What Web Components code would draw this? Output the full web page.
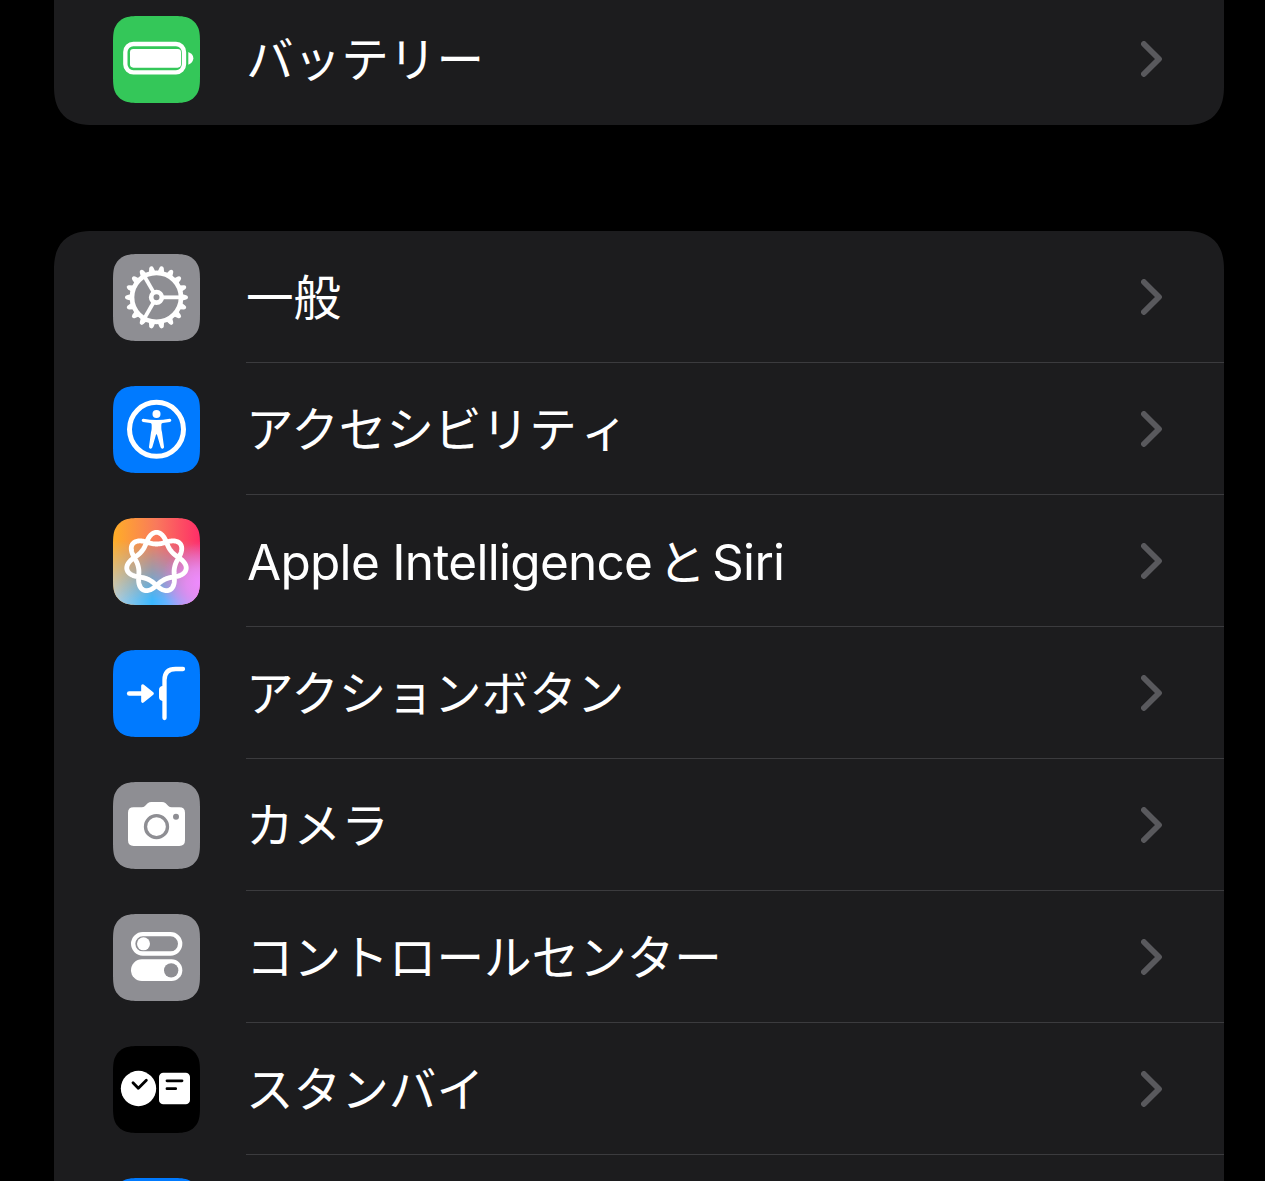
<!DOCTYPE html>
<html lang="ja">
<head>
<meta charset="utf-8">
<title>設定</title>
<style>
html, body { margin: 0; background: #000; }
body { height: 1181px; overflow: hidden; }
</style>
</head>
<body>
<settings-page></settings-page>
<script>
/* Continuous-curvature rounded square, 261 units wide. */
function tilePath(w, r) {
  const a = 1.528 * r, b = 1.088 * r, c = 0.868 * r, d = 0.631 * r, e = 0.075 * r, f = 0.372 * r, g = 0.169 * r;
  return `M${a} 0H${w - a}C${w - b} 0 ${w - c} 0 ${w - d} ${e}C${w - f} ${g} ${w - g} ${f} ${w - e} ${d}C${w} ${c} ${w} ${b} ${w} ${a}` +
    `V${w - a}C${w} ${w - b} ${w} ${w - c} ${w - e} ${w - d}C${w - g} ${w - f} ${w - f} ${w - g} ${w - d} ${w - e}C${w - c} ${w} ${w - b} ${w} ${w - a} ${w}` +
    `H${a}C${b} ${w} ${c} ${w} ${d} ${w - e}C${f} ${w - g} ${g} ${w - f} ${e} ${w - d}C0 ${w - c} 0 ${w - b} 0 ${w - a}` +
    `V${a}C0 ${b} 0 ${c} ${e} ${d}C${g} ${f} ${f} ${g} ${d} ${e}C${c} 0 ${b} 0 ${a} 0Z`;
}
const TILE = tilePath(261, 60);

function knotPath(cx, cy) {
  const pts = [];
  for (let i = 0; i < 560; i++) {
    const t = i / 560 * Math.PI * 4;
    const r = 71 + 17.5 * Math.cos(3.5 * t) + 2.5 * Math.cos(7 * t);
    pts.push((cx + r * Math.sin(t)).toFixed(2) + ' ' + (cy - r * Math.cos(t)).toFixed(2));
  }
  return 'M' + pts.join('L') + 'Z';
}

function gear(cx, cy) {
  let s = '';
  for (let i = 0; i < 18; i++) {
    s += `<path transform="translate(${cx} ${cy}) rotate(${i * 20})" d="M76 -10L89 -6.5Q94.500 -5 94.500 0Q94.500 5 89 6.5L76 10Z" fill="#fff"/>`;
  }
  for (const a of [0, 120, 240]) {
    s += `<path transform="translate(${cx} ${cy}) rotate(${a})" d="M18 0H72" stroke="#fff" stroke-width="11.500"/>`;
  }
  return s + `<circle cx="${cx}" cy="${cy}" r="73.500" fill="none" stroke="#fff" stroke-width="14"/>
    <circle cx="${cx}" cy="${cy}" r="16" fill="none" stroke="#fff" stroke-width="14"/>`;
}

/* Glyphs share a 261-unit tile whose origin is at (21, 21). */
const GLYPHS = {
  battery: { fill: '#34c759', art: `<g transform="translate(-18 -12)">
    <rect x="76" y="117" width="176" height="85" rx="24" fill="none" stroke="#fff" stroke-width="13"/>
    <rect x="90" y="132" width="153" height="56" rx="10" fill="#fff"/>
    <path d="M265 141Q280 147 280 160Q280 173 265 179Z" fill="#fff"/></g>` },
  general: { fill: '#8e8e93', art: gear(151.5, 151) },
  access: { fill: '#007aff', art: `<circle cx="151.5" cy="151" r="81" fill="none" stroke="#fff" stroke-width="15"/>
    <circle cx="151.5" cy="105" r="12" fill="#fff"/>
    <path d="M112 119Q107 119 107 124Q107 128 111 129L133 132Q137 133 137 137V148Q137 154 135 160L129 203Q128 208 133 209Q137 210 139 205L149 170Q151.500 162 154 170L164 205Q166 210 170 209Q175 208 174 203L168 160Q166 154 166 148V137Q166 133 170 132L192 129Q196 128 196 124Q196 119 191 119Q151.500 127 112 119Z" fill="#fff"/>` },
  siri: { fill: 'url(#base)', art: `<path d="${knotPath(151.5, 155)}" fill="none" stroke="#fff" stroke-width="14.500" stroke-linejoin="round"/>` },
  action: { fill: '#007aff', art: `<path d="M69.500 151.500H108" stroke="#fff" stroke-width="13.500" stroke-linecap="round"/>
    <path d="M110 128L139 151.500L110 175Z" fill="#fff" stroke="#fff" stroke-width="9" stroke-linejoin="round"/>
    <path d="M175.500 225V111Q175.500 78 209 78H231" fill="none" stroke="#fff" stroke-width="13" stroke-linecap="round"/>
    <path d="M176 129H170Q159 130 159 141V162Q159 173 170 174H176Z" fill="#fff"/>` },
  camera: { fill: '#8e8e93', art: `<path d="M83 97H107Q113 97 117 93L125 85Q130 81 136 81H168Q174 81 179 85L187 93Q191 97 197 97H220Q237 97 237 113V196Q237 213 220 213H83Q66 213 66 196V113Q66 97 83 97Z" fill="#fff"/>
    <circle cx="151.500" cy="155" r="33" fill="none" stroke="#8e8e93" stroke-width="10"/><circle cx="210" cy="125.500" r="9" fill="#8e8e93"/>` },
  control: { fill: '#8e8e93', art: `<rect x="81.500" y="81.500" width="141" height="58" rx="29" fill="none" stroke="#fff" stroke-width="13"/>
    <circle cx="112.500" cy="110.500" r="19.500" fill="#fff"/><rect x="75" y="157" width="154" height="65" rx="32.500" fill="#fff"/><circle cx="195.500" cy="190" r="21.500" fill="#8e8e93"/>` },
  standby: { fill: '#000', art: `<circle cx="97.500" cy="148.500" r="53" fill="#fff"/><path d="M81 131L97 148L121 124" fill="none" stroke="#000" stroke-width="8.500" stroke-linecap="round" stroke-linejoin="round"/>
    <rect x="159" y="101" width="93" height="95" rx="13" fill="#fff"/><path d="M183 125.500H228M183 149H209" stroke="#000" stroke-width="8.500" stroke-linecap="round"/>` },
  blank: { fill: '#007aff', art: '' }
};

const SIRI_DEFS = `<defs>
  <linearGradient id="base" x1="0" y1="0" x2="1" y2="0"><stop offset="0" stop-color="#ffae27"/><stop offset=".5" stop-color="#f9795c"/><stop offset="1" stop-color="#ff2d68"/></linearGradient>
  <linearGradient id="low" x1="0" y1="0" x2="1" y2="0"><stop offset="0" stop-color="#b9ccd8"/><stop offset=".45" stop-color="#3bb8ff"/><stop offset=".65" stop-color="#6fb2ff"/><stop offset="1" stop-color="#d69bff"/></linearGradient>
  <linearGradient id="fade" x1="0" y1="0" x2="0" y2="1"><stop offset=".25" stop-color="#000"/><stop offset=".62" stop-color="#888"/><stop offset=".95" stop-color="#fff"/></linearGradient>
  <mask id="m" maskContentUnits="userSpaceOnUse"><rect width="261" height="261" fill="url(#fade)"/></mask>
  <radialGradient id="violet" cx="1" cy=".74" r=".45"><stop offset="0" stop-color="#ee8bff"/><stop offset=".35" stop-color="#e98cf4" stop-opacity=".8"/><stop offset="1" stop-color="#e080e0" stop-opacity="0"/></radialGradient></defs>`;

customElements.define('settings-icon', class extends HTMLElement {
  connectedCallback() {
    const name = this.getAttribute('name');
    const g = GLYPHS[name];
    const siri = name === 'siri';
    this.attachShadow({ mode: 'open' }).innerHTML = `
      <style>:host { display: block; width: 87px; height: 87px; flex: none; } svg { display: block; width: 100%; height: 100%; }</style>
      <svg viewBox="0 0 261 261">${siri ? SIRI_DEFS : ''}
        <path d="${TILE}" fill="${g.fill}"/>
        ${siri ? `<path d="${TILE}" fill="url(#low)" mask="url(#m)"/><path d="${TILE}" fill="url(#violet)"/>` : ''}
        <g transform="translate(-21 -21)">${g.art}</g>
      </svg>`;
  }
});

customElements.define('settings-row', class extends HTMLElement {
  connectedCallback() {
    this.attachShadow({ mode: 'open' }).innerHTML = `
      <style>
        :host { display: flex; box-sizing: border-box; height: 132px; padding-left: 59px; }
        settings-icon { margin: 23px 46px 0 0; }
        .body { flex: 1; display: flex; align-items: center; justify-content: space-between; box-sizing: border-box;
          padding: 0 62px 0 0; border-bottom: 1px solid #3b3b3e; }
        :host([last]) .body { border-color: transparent; }
        .label { font: 400 47.6px/60px "Noto Sans CJK JP", sans-serif; color: #fff; white-space: nowrap; padding-bottom: 3px; }
        :host([mixed]) .label { padding: 0 0 0 1px; }
        svg { display: block; width: 21px; height: 36px; flex: none; }
      </style>
      <settings-icon name="${this.getAttribute('icon')}"></settings-icon>
      <div class="body">
        <div class="label"><slot></slot></div>
        <svg viewBox="0 0 21 36"><path d="M2.900 3L18 18L2.900 33" fill="none" stroke="#59595d" stroke-width="5.800" stroke-linecap="round" stroke-linejoin="round"/></svg>
      </div>`;
  }
});

customElements.define('latin-text', class extends HTMLElement {
  connectedCallback() {
    this.attachShadow({ mode: 'open' }).innerHTML = `
      <style>:host { font-family: Inter, sans-serif; font-size: 49.5px; letter-spacing: -0.72px; }</style><slot></slot>`;
  }
});

customElements.define('settings-group', class extends HTMLElement {
  connectedCallback() {
    this.attachShadow({ mode: 'open' }).innerHTML = `
      <style>
        :host { display: block; background: #1c1c1e; border-radius: 31px; overflow: hidden; flex: none; }
        @supports (corner-shape: superellipse(1.3)) { :host { border-radius: 39px; corner-shape: superellipse(1.3); } }
        :host([continued]) { border-top-left-radius: 0; border-top-right-radius: 0; }
      </style><slot></slot>`;
  }
});

customElements.define('settings-page', class extends HTMLElement {
  connectedCallback() {
    this.attachShadow({ mode: 'open' }).innerHTML = `
      <style>
        :host { display: flex; flex-direction: column; gap: 106px; box-sizing: border-box; height: 1181px; overflow: hidden; padding: 0 41px 0 54px; background: #000; }
        .first { margin-top: -7px; }
        .to { margin: 0 -7px 0 6px; }
        .small { margin-left: 4px; }
      </style>
      <settings-group class="first" continued><settings-row icon="battery" last>バッテリー</settings-row></settings-group>
      <settings-group>
        <settings-row icon="general">一般</settings-row>
        <settings-row icon="access">アクセシビリテ<span class="small">ィ</span></settings-row>
        <settings-row icon="siri" mixed><latin-text>Apple Intelligence</latin-text><span class="to">と</span><latin-text>Siri</latin-text></settings-row>
        <settings-row icon="action">アクションボタン</settings-row>
        <settings-row icon="camera">カメラ</settings-row>
        <settings-row icon="control">コントロールセンター</settings-row>
        <settings-row icon="standby">スタンバイ</settings-row>
        <settings-row icon="blank" last></settings-row>
      </settings-group>`;
  }
});
</script>
</body>
</html>
